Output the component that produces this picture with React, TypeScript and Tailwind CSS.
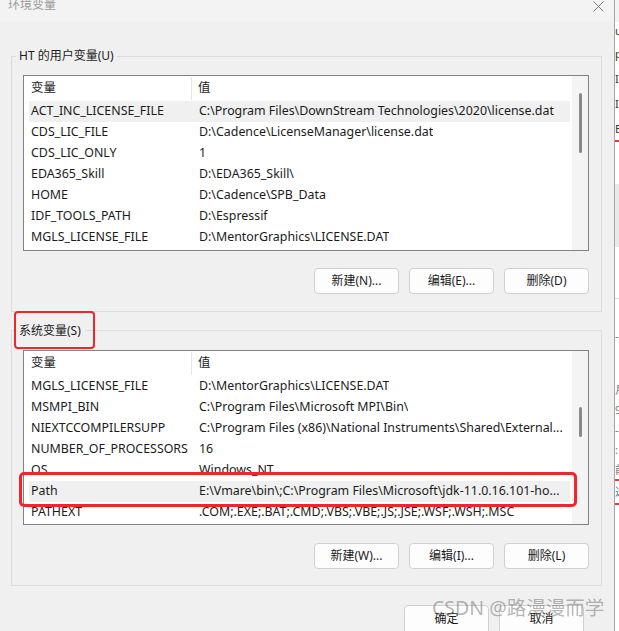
const userVars = [
  ["ACT_INC_LICENSE_FILE", "C:\\Program Files\\DownStream Technologies\\2020\\license.dat"],
  ["CDS_LIC_FILE", "D:\\Cadence\\LicenseManager\\license.dat"],
  ["CDS_LIC_ONLY", "1"],
  ["EDA365_Skill", "D:\\EDA365_Skill\\"],
  ["HOME", "D:\\Cadence\\SPB_Data"],
  ["IDF_TOOLS_PATH", "D:\\Espressif"],
  ["MGLS_LICENSE_FILE", "D:\\MentorGraphics\\LICENSE.DAT"],
];

const sysVars = [
  ["MGLS_LICENSE_FILE", "D:\\MentorGraphics\\LICENSE.DAT"],
  ["MSMPI_BIN", "C:\\Program Files\\Microsoft MPI\\Bin\\"],
  ["NIEXTCCOMPILERSUPP", "C:\\Program Files (x86)\\National Instruments\\Shared\\External..."],
  ["NUMBER_OF_PROCESSORS", "16"],
  ["OS", "Windows_NT"],
  ["Path", "E:\\Vmare\\bin\\;C:\\Program Files\\Microsoft\\jdk-11.0.16.101-ho..."],
  ["PATHEXT", ".COM;.EXE;.BAT;.CMD;.VBS;.VBE;.JS;.JSE;.WSF;.WSH;.MSC"],
];

const Btn = ({ label }: { label: string }) => (
  <div className="w-[85px] h-[26px] flex items-center justify-center bg-[#fdfdfd] border border-[#d0d0d0] rounded-[4px] text-[12px] text-[#1b1b1b]">
    {label}
  </div>
);

const VarList = ({
  rows,
  selected,
  height,
  thumbTop,
  thumbH,
}: {
  rows: string[][];
  selected: number;
  height: string;
  thumbTop: string;
  thumbH: string;
}) => (
  <div className={`${height} w-[566px] border border-[#838383] bg-white flex overflow-hidden text-[12.4px]`}>
    <div className="w-[546px] pl-[5px] flex flex-col">
      <div className="h-[25px] flex shrink-0">
        <div className="w-[163px] pl-[2px] flex items-center border-r border-[#e5e5e5] my-[1px]">变量</div>
        <div className="pl-[6px] flex items-center">值</div>
      </div>
      {rows.map((r, i) => (
        <div key={i} className={`h-[21px] shrink-0 flex items-center whitespace-nowrap ${i === selected ? "bg-[#f0f0f0]" : ""}`}>
          <div className="w-[163px] pl-[2px] overflow-hidden">{r[0]}</div>
          <div className="pl-[7px] overflow-hidden">{r[1]}</div>
        </div>
      ))}
    </div>
    <div className="ml-[2px] w-[16px] bg-[#f4f4f4] flex flex-col items-center">
      <div className={`${thumbTop} ${thumbH} w-[3px] rounded-full bg-[#8a8a8a]`} />
    </div>
  </div>
);

export default function App() {
  return (
    <div className="relative w-[619px] h-[631px] overflow-hidden flex bg-white text-[12px] text-[#1b1b1b] font-[family-name:'Noto_Sans','Noto_Sans_CJK_SC',sans-serif]">
      <div className="w-[615px] shrink-0 bg-[#f0f0f0] border-r border-[#a6a6a6] flex flex-col">
        {/* title bar */}
        <div className="h-[22px] shrink-0 bg-[#f3f3f3] flex justify-between">
          <div className="pl-[8px] leading-[10px] text-[12px] text-[#9a9a9a]">环境变量</div>
          <svg className="mr-[10px] mt-[1px]" width="11" height="11" viewBox="0 0 11 11">
            <path d="M0.5 0.5 L10.5 10.5 M10.5 0.5 L0.5 10.5" stroke="#7a7a7a" strokeWidth="1" fill="none" />
          </svg>
        </div>

        <div className="shrink-0 pl-[11px] pt-[26px]">
          <fieldset className="w-[591px] border border-[#dcdcdc] p-0">
            <legend className="ml-[4px] px-[3px] leading-[16px]">HT 的用户变量(U)</legend>
            <div className="pl-[11px] pt-[11px] pb-[17px]">
              <VarList rows={userVars} selected={0} height="h-[176px]" thumbTop="mt-[17px]" thumbH="h-[60px]" />
              <div className="mt-[17px] w-[566px] flex justify-end gap-[10px]">
                <Btn label="新建(N)..." />
                <Btn label="编辑(E)..." />
                <Btn label="删除(D)" />
              </div>
            </div>
          </fieldset>

          <fieldset className="mt-[10px] w-[591px] border border-[#dcdcdc] p-0">
            <legend className="ml-[3px] px-[4px] leading-[16px] translate-y-[1px]">系统变量(S)</legend>
            <div className="pl-[11px] pt-[12px] pb-[16px]">
              <VarList rows={sysVars} selected={5} height="h-[175px]" thumbTop="mt-[56px]" thumbH="h-[30px]" />
              <div className="mt-[18px] w-[566px] flex justify-end gap-[10px]">
                <Btn label="新建(W)..." />
                <Btn label="编辑(I)..." />
                <Btn label="删除(L)" />
              </div>
            </div>
          </fieldset>
        </div>

        <div className="shrink-0 mt-[19px] pr-[30px] flex justify-end gap-[10px]">
          <div className="w-[85px] h-[30px] bg-[#fdfdfd] border border-[#d0d0d0] rounded-[4px] flex justify-center pt-[4px]">确定</div>
          <div className="w-[85px] h-[30px] bg-[#fdfdfd] border border-[#d0d0d0] rounded-[4px] flex justify-center pt-[4px]">取消</div>
        </div>
      </div>

      {/* window behind, peeking out on the right */}
      <div className="w-[4px] overflow-visible flex flex-col text-[11px] leading-[14px] text-[#333] whitespace-nowrap">
        <div className="h-[22px] shrink-0 bg-[#f3f3f3]" />
        <div className="h-[25px] shrink-0 pt-[2px]">u</div>
        <div className="h-[25px] shrink-0">p</div>
        <div className="h-[25px] shrink-0">IC</div>
        <div className="h-[25px] shrink-0">IC</div>
        <div className="h-[18px] shrink-0">E</div>
        <div className="h-[2px] shrink-0 bg-[#e53935]" />
        <div className="h-[42px] shrink-0" />
        <div className="h-[63px] shrink-0 bg-[#e9e9e9]" />
        <div className="h-[52px] shrink-0 border-b border-[#dcdcdc]" />
        <div className="h-[84px] shrink-0 pt-[30px] text-[#777]">-1</div>
        <div className="h-[20px] shrink-0 text-[#777]">月</div>
        <div className="h-[20px] shrink-0 text-[#777]">9</div>
        <div className="h-[20px] shrink-0 text-[#777]">-</div>
        <div className="h-[20px] shrink-0 text-[#777]">:</div>
        <div className="h-[16px] shrink-0 text-[#777]">前</div>
        <div className="h-[2px] shrink-0 bg-[#e53935]" />
        <div className="h-[22px] shrink-0 pt-[4px] text-[#4a7aa8]">选</div>
        <div className="h-[2px] shrink-0 bg-[#e53935]" />
      </div>

      {/* annotation overlays */}
      <div className="absolute left-[14px] top-[311px] w-[81px] h-[38px] border-[2.5px] border-[#f0262a] rounded-[4px]" />
      <div className="absolute left-[19px] top-[472px] w-[558px] h-[35px] border-[3px] border-[#f0262a] rounded-[5px]" />
      <div className="absolute left-[432px] top-[596px] text-[19.5px] leading-[24px] text-[rgba(90,90,90,0.45)] whitespace-nowrap">
        CSDN @路漫漫而学
      </div>
    </div>
  );
}
